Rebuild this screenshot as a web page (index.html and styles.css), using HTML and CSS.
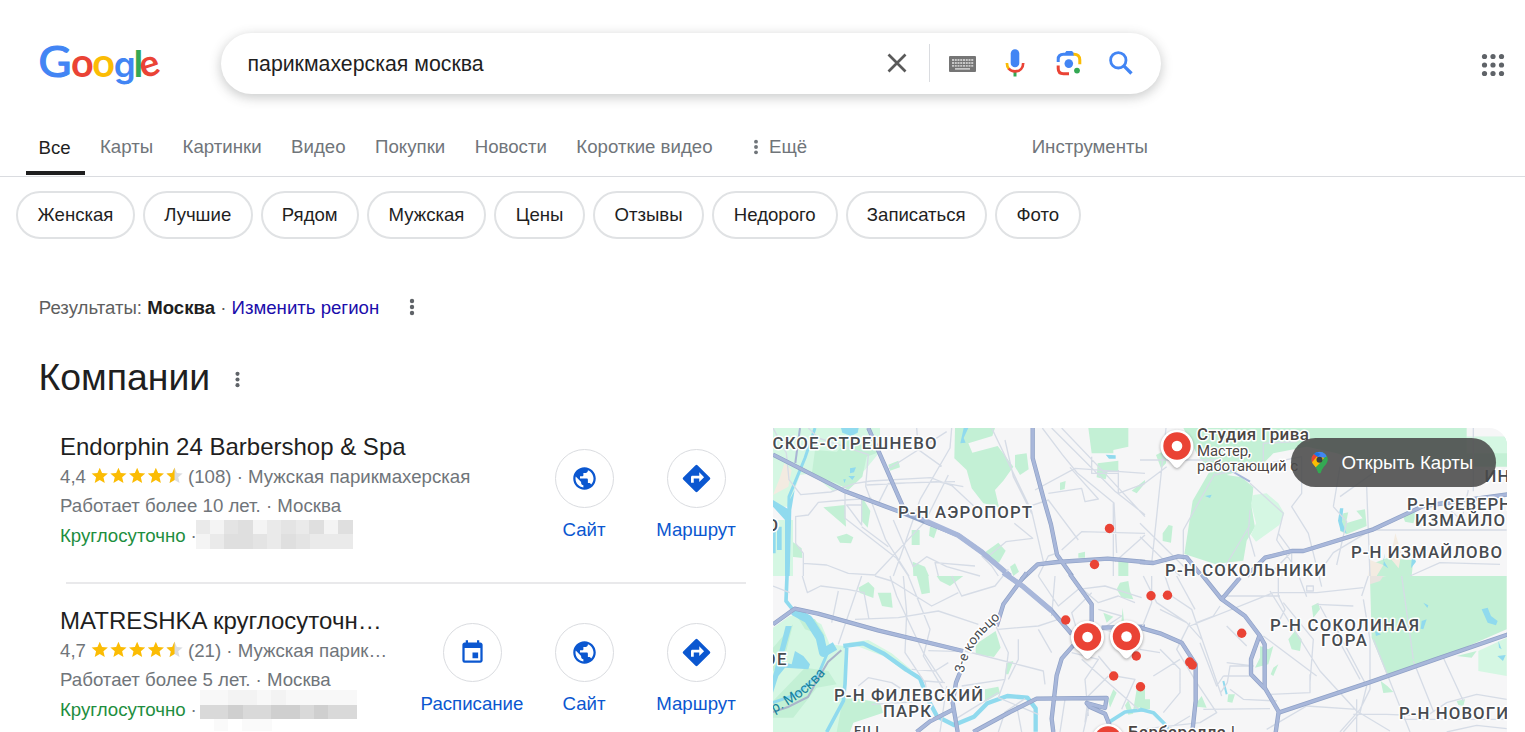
FILE: index.html
```html
<!DOCTYPE html>
<html lang="ru">
<head>
<meta charset="utf-8">
<title>парикмахерская москва - Поиск в Google</title>
<link rel="stylesheet" href="styles.css">
</head>
<body>
<svg class="defs" width="0" height="0">
  <defs>
    <symbol id="dots" viewBox="0 0 24 24"><circle cx="12" cy="4" r="2.900"/><circle cx="12" cy="12" r="2.900"/><circle cx="12" cy="20" r="2.900"/></symbol>
    <symbol id="globe" viewBox="0 0 24 24"><path d="M12 2C6.48 2 2 6.48 2 12s4.48 10 10 10 10-4.480 10-10S17.520 2 12 2zm-1 17.930c-3.950-.490-7-3.850-7-7.930 0-.620.080-1.210.210-1.790L9 15v1c0 1.100.900 2 2 2v1.930zm6.900-2.540c-.260-.810-1-1.390-1.900-1.390h-1v-3c0-.550-.450-1-1-1H8v-2h2c.550 0 1-.450 1-1V7h2c1.100 0 2-.900 2-2v-.410c2.930 1.190 5 4.060 5 7.410 0 2.080-.800 3.970-2.100 5.390z"/></symbol>
    <symbol id="route" viewBox="0 0 24 24"><path d="M21.710 11.290l-9-9a.996.996 0 0 0-1.410 0l-9 9a.996.996 0 0 0 0 1.410l9 9c.390.390 1.020.390 1.410 0l9-9a.996.996 0 0 0 0-1.410zM14 14.500V12h-4v3H8v-4c0-.550.450-1 1-1h5V7.500l3.500 3.500-3.500 3.500z"/></symbol>
    <symbol id="calendar" viewBox="0 0 24 24"><path d="M17 12h-5v5h5v-5zM16 1v2H8V1H6v2H5c-1.110 0-1.990.900-1.990 2L3 19a2 2 0 0 0 2 2h14c1.100 0 2-.900 2-2V5c0-1.100-.900-2-2-2h-1V1h-2zm3 18H5V8h14v11z"/></symbol>
    <symbol id="star" viewBox="0 0 24 24"><path d="M12 17.270L18.180 21l-1.640-7.030L22 9.240l-7.190-.610L12 2 9.190 8.630 2 9.240l5.460 4.730L5.820 21z"/></symbol>
    <symbol id="stars" viewBox="0 0 92 18">
      <g fill="#fbbc04"><use href="#star" x="-1" y="-1" width="19.500" height="19.500"/><use href="#star" x="17.700" y="-1" width="19.500" height="19.500"/><use href="#star" x="36.400" y="-1" width="19.500" height="19.500"/><use href="#star" x="55.100" y="-1" width="19.500" height="19.500"/></g>
      <use href="#star" x="73.800" y="-1" width="19.500" height="19.500" fill="#dadce0"/>
      <path fill="#fbbc04" d="M83.550 .6V13l-5 3.100 1.300-5.700-4.400-3.900 5.800-.5z"/>
    </symbol>
    <symbol id="pin" viewBox="-18 -18 36 42"><path d="M0 22C-2.500 22-4 19-8 14.600A16.500 16.500 0 1 1 8 14.600C4 19 2.500 22 0 22z" fill="#fff"/><circle r="13.700" fill="#ea4335"/><circle r="5.300" fill="#fff"/></symbol>
  </defs>
</svg>

<header class="header">
  <svg class="logo" viewBox="0 0 126 50" role="img" aria-label="Google">
    <text class="lg-a" transform="translate(-.6 35.700) scale(1.060 1)" fill="#4285f4">G</text>
    <text class="lg-b" x="32" y="35.900" fill="#ea4335">o</text>
    <text class="lg-b" x="53.200" y="35.900" fill="#fbbc05">o</text>
    <text class="lg-c" x="74.700" y="35.700" fill="#4285f4">g</text>
    <text class="lg-d" x="94.500" y="36" fill="#34a853">l</text>
    <text class="lg-e" transform="translate(104.300 37.800) rotate(-18)" fill="#ea4335">e</text>
  </svg>
  <div class="search">
    <span class="query">парикмахерская москва</span>
    <div class="tools">
      <svg class="t-close" viewBox="0 0 20 20"><path d="M1.500 1.500l17 17M18.500 1.500l-17 17"/></svg>
      <span class="t-sep"></span>
      <svg class="t-kbd" viewBox="0 0 27 16"><rect width="27" height="16" rx="1" fill="#757575"/><path d="M3 4h21.500M3 7h21.500M3 9.900h21.500" stroke="#c8c8c8" stroke-width="1.800" stroke-dasharray="2 .75"/><path d="M6 12.900h15" stroke="#e4e4e4" stroke-width="1.300"/></svg>
      <svg class="t-mic" viewBox="0 0 24 30" fill="none"><rect x="7.700" y="1.200" width="8.600" height="18" rx="4.300" fill="#4285f4"/><path d="M12 24v4.500" stroke="#34a853" stroke-width="3"/><path d="M3.900 15c0 2.300.7 4.400 2 5.800" stroke="#fbbc04" stroke-width="2.700"/><path d="M5.600 20.500c1.500 1.800 3.700 2.900 6.400 2.900 5 0 8.200-3.500 8.200-8.400" stroke="#ea4335" stroke-width="2.700"/></svg>
      <svg class="t-lens" viewBox="0 0 26 26" fill="none" stroke-width="3"><path d="M2.200 12V9.500Q2.200 4.300 7.500 4.300H18" stroke="#4285f4"/><path d="M8 4.500L10.300 1h5.800l2.800 4z" fill="#4285f4"/><path d="M17.500 4.300Q23.800 4 23.800 10v4.300" stroke="#fbbc04"/><path d="M2.200 15.500v3Q2.200 23.800 7.500 23.800H13" stroke="#ea4335"/><circle cx="12.800" cy="13.600" r="4.300" fill="#4285f4"/><circle cx="21" cy="20.600" r="2.900" fill="#34a853"/></svg>
      <svg class="t-search" viewBox="0 0 24 24" fill="none" stroke="#4285f4"><circle cx="9.300" cy="9.300" r="7.700" stroke-width="2.800"/><path d="M14.800 14.800l7.700 7.700" stroke-width="3.300"/></svg>
    </div>
  </div>
  <svg class="apps" viewBox="0 0 24 24" fill="#5f6368"><circle cx="3.500" cy="3.500" r="2.600"/><circle cx="12" cy="3.500" r="2.600"/><circle cx="20.500" cy="3.500" r="2.600"/><circle cx="3.500" cy="12" r="2.600"/><circle cx="12" cy="12" r="2.600"/><circle cx="20.500" cy="12" r="2.600"/><circle cx="3.500" cy="20.500" r="2.600"/><circle cx="12" cy="20.500" r="2.600"/><circle cx="20.500" cy="20.500" r="2.600"/></svg>
</header>

<nav class="tabs">
  <span class="tab active">Все</span><span class="tab">Карты</span><span class="tab">Картинки</span><span class="tab">Видео</span><span class="tab">Покупки</span><span class="tab">Новости</span><span class="tab">Короткие видео</span>
  <span class="tab more"><svg class="more-dots"><use href="#dots"/></svg>Ещё</span>
  <span class="tab instruments">Инструменты</span>
</nav>

<div class="chips">
  <span class="chip w119">Женская</span><span class="chip w110">Лучшие</span><span class="chip w98">Рядом</span><span class="chip w119">Мужская</span><span class="chip w91">Цены</span><span class="chip w111">Отзывы</span><span class="chip w126">Недорого</span><span class="chip w141">Записаться</span><span class="chip w85">Фото</span>
</div>

<div class="region">
  <span>Результаты: <b>Москва</b> · <a>Изменить регион</a></span>
  <svg class="kebab"><use href="#dots"/></svg>
</div>
<div class="heading"><h2>Компании</h2><svg class="kebab small"><use href="#dots"/></svg></div>

<main class="content">
  <section class="list">
    <article class="place">
      <div class="info">
        <h3>Endorphin 24 Barbershop &amp; Spa</h3>
        <p><span>4,4</span><svg class="stars"><use href="#stars"/></svg><span>(108) · Мужская парикмахерская</span></p>
        <p>Работает более 10 лет. · Москва</p>
        <p><span class="open">Круглосуточно</span><span>·</span><svg class="pixels first" viewBox="0 0 157 29"><rect width="157" height="29" fill="#eaeaea"/><path fill="#f4f4f4" d="M14 0h14v14H14zM57 0h14v14H57zM128 0h15v14h-15zM0 14h14v15H0z"/><path fill="#dfdfdf" d="M42 0h15v14H42zM85 14h15v15H85zM113 0h15v14h-15zM142 0h15v14h-15zM28 14h29v15H28z"/><path fill="#e4e4e4" d="M28 0h14v14H28zM85 0h15v14H85zM57 14h14v15H57zM100 14h14v15h-14z"/></svg></p>
      </div>
      <div class="actions">
        <div class="action"><span class="round"><svg class="i-globe"><use href="#globe"/></svg></span>Сайт</div>
        <div class="action"><span class="round"><svg class="i-route"><use href="#route"/></svg></span>Маршрут</div>
      </div>
    </article>
    <article class="place second">
      <div class="info">
        <h3>MATRESHKA круглосуточн…</h3>
        <p><span>4,7</span><svg class="stars"><use href="#stars"/></svg><span>(21) · Мужская парик…</span></p>
        <p>Работает более 5 лет. · Москва</p>
        <p><span class="open">Круглосуточно</span><span>·</span><svg class="pixels last" viewBox="0 0 157 41"><path fill="#f8f8f8" d="M0 0h157v15H0z"/><path fill="#f3f3f3" d="M28 0h29v15H28zM71 0h15v15H71z"/><path fill="#d9d9d9" d="M0 15h157v14H0z"/><path fill="#cfcfcf" d="M28 15h15v14H28zM71 15h29v14H71zM114 15h14v14h-14z"/><path fill="#fafafa" d="M14 29h14v12H14zM42 29h30v12H42z"/></svg></p>
      </div>
      <div class="actions">
        <div class="action"><span class="round"><svg class="i-cal"><use href="#calendar"/></svg></span>Расписание</div>
        <div class="action"><span class="round"><svg class="i-globe"><use href="#globe"/></svg></span>Сайт</div>
        <div class="action"><span class="round"><svg class="i-route"><use href="#route"/></svg></span>Маршрут</div>
      </div>
    </article>
  </section>

  <section class="map">
    <svg class="map-canvas" viewBox="773 428 734 304">
      <rect x="772" y="428" width="736" height="305" fill="#f6f6f7"/>
      <!-- north-west -->
      <g transform="translate(765 420) scale(.33333)">
        <path class="park-l" d="M24 24H345V95L300 150 205 215 140 160 105 165 70 260H24z"/>
        <path class="park" d="M150 90L215 95 250 60 345 95 305 110 292 170 250 210 215 190 140 165zM570 24H690L682 48 610 70 622 98 698 78 745 140 715 182 690 210 702 262 655 250 620 205 605 150 568 115zM750 105l35-5 6 48-26 17-15-25zM970 24H1090V80L1045 90V100H980zM998 130l62-8v33h-32l-6 23-27-6zM175 262l65-7 3 65zM288 225l28 48-8 50-20-23zM215 350l30-9 20 11-7 18-33-2zM440 330h24v45h-24zM495 320l22 5-10 30-15-8zM370 134l30-12 5 20-30 10zM75 360l35 25 2 29-32-4zM443 425l37 15 12 28h-47zM885 188l17-5-3 24-14 4zM940 400l20-5v18h-20zM1060 425h30v43h-30zM662 395l38-27 22 24-20 36-40-18zM735 440l15-10 12 25-17 13zM1100 212l40-32v10l-25 30z"/>
        <path fill="#f3ebe1" d="M58 130l22 20-10 50-46 25 20-50z"/>
        <path class="park-l" d="M24 300h60v168H24z"/>
        <path class="water" d="M228 24h53l-3 14-20 10-26-10zM255 145l18-3-6 15-12 3zM250 168l20 0-8 12zM235 178l8 0-5 12zM1022 104l30 2v10h-20zM24 240l50 30v-30l15-30-10 60-5 198H60V300l-36-40zM36 320h14v70H36zM24 330h8v70h-8zM596 24h14l-14 30 6 14-16 2z"/>
        <path class="river" d="M150 24l-30 90-48 116-5 238" stroke-width="9"/>
        <g class="minor">
          <path d="M24 24l40 75 8 80 35 45 90-8 70-25 50-8 180-10 65 25 70 65M130 24l30 30 150 50-8 95 60 160 70 109M305 195l210-10 80 15M560 24l-5 60-90 155-55 160-25 69M455 24l5 65 70 50M545 35L365 150M90 290l40-5 30-38 80-7 80-5M92 290v80l23 30v68M115 430l70 5 65 25 80 5 150-160 70-140M240 210v85l155 120 35 53M290 225v90l-45-60h45M290 320l80 60M385 300l60 140 40-30 60 30 100 28M680 24l120 250 35 150M720 60l25 110 55 110M832 24l60 80 45 55 110 90 8 150M860 24l190 190 90 70M1140 290l-120-130-130-136M810 210l120-65 210 15M980 110v50h80M1060 150v70l80-30M850 220l100-15 10 40 40-8-85-95M790 260l60-20 90 120M748 310l55 45-80 10-60 50M890 390l60-55 190 5M1140 345l-90 80M1045 468V250M820 468l30-60 30-10M700 468l-20-30-30-30M520 468l-10-40 120 10M340 250l30-60 200-5"/>
        </g>
        <g class="hwy-case"><path d="M310 24l110 250 60 28"/><path d="M24 104l216 110 160 60 180 72 70 50 85 72"/><path d="M803 24v90l35 130 20 70 18 90 45 64"/><path d="M770 478l48-45 60-7 150-10 112 10"/></g>
        <path d="M105 24l-14 105" fill="none" stroke="#a8b4d4" stroke-width="6"/>
        <g class="hwy"><path d="M310 24l110 250 60 28"/><path d="M24 104l216 110 160 60"/><path class="wide" d="M480 302l100 44 70 50 85 72"/><path d="M803 24v90l35 130 20 70 18 90 45 64"/><path d="M770 478l48-45 60-7 150-10 112 10"/></g>
      </g>
      <!-- north-east -->
      <g transform="translate(1140 420) scale(.33333)">
        <path class="park" d="M130 24H980V50H1110V140H700L590 100 500 80 400 100 370 130 260 165 225 160 175 110zM225 160l80 12 35 30-5 60 10 60-25 40-10 60-85 10-92-30 25-160 55-95zM48 105l30-15v40l-15 15zM68 340l18-25 12 3-5 50-25-5zM610 280l65-12 5 50-60 25-20-10zM790 290l20-20 20 10-10 30-25-5zM700 430l40-15 80 5-5 48H710z"/>
        <path class="park-l" d="M340 225l40-5 35 30 18 30-15 35-70 50-15-20 15-35-15-60zM980 50h130V100H980z"/>
        <path fill="#f3ebe1" d="M690 420l40 15-20 33h-25zM766 340l18 60-8 45-25-30z"/>
        <path fill="#f6f6f7" d="M630 250l38 45-50 15z"/>
        <path class="water" d="M195 228l20-4-5 10zM600 265h10l-4 40 14 35-18-8-8-30zM735 400l-5 20 15 25-15-10zM820 405l8 20-15 20 2-25z"/>
        <g class="minor">
          <path d="M0 120h240M0 200l80-60M78 24L35 430M0 310l160 158M0 350l120 118M225 160L130 330v90M225 165l60-15 100-20 100-20 0 110-30 40 50 80 40 160M330 190l100 90-20 80 60 90 30 80M330 270l-5 70 20 70M580 260l20-120M580 260l40 45-30 130M680 200l10 268M600 230l140-100M430 280l-15 60 40 55v73M455 395l-70 73M370 130V70l100-5M700 330h400M530 468l50-70 100-60M810 468l90-40 180 5M905 250l60 50 20-90M1000 24v190M240 465l90-150"/>
        </g>
        <path d="M270 150l60 35" fill="none" stroke="#a8b7da" stroke-width="6"/>
        <g class="hwy-case"><path d="M0 426l40 3 75-20 25 3 40 50"/><path d="M320 468l55-55 80-20h35l210-65 150-70 255-35"/></g>
        <g class="hwy"><path d="M0 426l40 3 75-20 25 3 40 50"/><path d="M320 468l55-55 80-20h35l210-65 150-70 255-35"/></g>
      </g>
      <!-- south-west -->
      <g transform="translate(765 576) scale(.33333)">
        <path class="park-l" d="M24 155l50-35 40-5 55 30 25 60 45 5-5 258H24z"/>
        <path class="park" d="M90 110l60 20 30 50-60-20zM24 215l60-70-30 120-30 20zM120 275l70 10 25 40-60 10-70 90-61 0 0-50zM235 360l110 20 10 30-90 30-10 28H215zM280 35l30-17 18 18-3 30-40-15zM338 50l40 0 5 45-32-5zM455 0h35l5 50-25 5zM515 0h80l-40 30-30-15zM632 205l60-40 15 50-20 28-55-8zM660 340l40-8 5 20-45 25zM1065 20l25-5 5 30 10 25-35-5-15-25zM1015 110l30 12-20 18zM1045 340l10 10-20 45-5-20zM1115 340l25-10v60l-35 10zM1080 388l10-15 15 40-15 3zM725 260l20-5-15 40-10 0zM1068 150l5-55 6 60z"/>
        <path class="park-l" d="M250 200l60-8 70 40 60 50-20 5-60-45z"/>
        <path class="water" d="M80 150h-18l-38 150v50l16-50 20-25 70 5 5-15-20-25-25-15-10 40-30-8z"/>
        <path class="river" d="M66 0l-3 75 20 25" stroke-width="11"/>
        <path class="river" d="M85 105l45 25 35 55 10 45 35-20" stroke-width="26"/>
        <path class="river" d="M190 225l-30 70-65 60-71 25" stroke-width="9"/>
        <path class="river" d="M235 210l60-8 60 30 70 50 40 25 22 60 30 55 50 25 60-25 40-40 60-22 60 5 25 32v70" stroke-width="13"/>
        <path class="river" d="M245 215l-5 110-5 50-50 93M1030 440l50-32 60-8" stroke-width="11"/>
        <path fill="none" stroke="#aab4ca" stroke-width="6" d="M24 408l45-15 60-30 30-55 30-50 40-35"/>
        <g class="minor">
          <path d="M112 0l15 50 40-20 80 10 50 10 15 80M290 0l-70 205M200 140l20-95M270 130l130-5 120-20 120 40M330 0l50 15 120 75 80-40M375 0l20 60 80 170 60 90M415 0l10 110-5 120 60 90M430 0l65 160-20 80 60 100M600 225l235 60 5 40M490 224l105 3M560 0l30 60 100-30 40-50M540 320l-60-5 10 60-170 10M280 330l30-25 70 15 55 35M545 330l-20 138M590 330l130-20-20 55 120 50M720 310l10-80-40-85M700 160l120-10 60-20M760 190v60l-30 60M820 0l60 90 60-50 80-10 110 35M870 0l-10 120M930 20l70 60 60-20 50 20M980 50l-60 60 30 100M1000 100l70 20-60 40 100 20M920 230l80 20-40 60 10 110M1000 240l50 60 60 10-40 90M950 250l170 150M1030 300l-60 60-10 80M860 230l-40-70M570 430l130-80M700 468l20-60 60-40M770 468l-15-80M900 370l-15 98M975 380l-20 88M440 280l70 5 40-25M24 30l50 20"/>
        </g>
        <g class="hwy-case"><path d="M24 145l65-47 70 15 180 50 255 62"/><path d="M715-10l60 42 85 72 60 70"/><path d="M785-10l-70 95-20 65M585 290l-12 30-10 60 15 88"/><path d="M915-5l65 90v55M1010 155l130-3M925 208l-35 40-15 50-15 130 5 40"/><path d="M625 468l110-60 80-40 210-2-5 30-55-15 10 12 45 20 22 55M565 400l-70 36-40 32"/></g>
        <g class="hwy"><path d="M24 145l65-47 70 15 180 50 255 62"/><path class="wide" d="M715-10l60 42 85 72"/><path d="M850 95l70 79"/><path d="M785-10l-70 95-20 65M585 290l-12 30-10 60 15 88"/><path d="M915-5l65 90v55M1010 155l130-3M925 208l-35 40-15 50-15 130 5 40"/><path d="M625 468l110-60 80-40 210-2-5 30-55-15 10 12 45 20 22 55M565 400l-70 36-40 32"/></g>
      </g>
      <!-- south-east -->
      <g transform="translate(1140 576) scale(.33333)">
        <path class="park" d="M690 5l50-5h360v160l-240 105-120 30-45-110zM515 90l20-10 5 20-20 25zM445 190l20-25 20 25-5 35-25-5zM360 210l25 10 15-10-15 55-40 10 15-30zM400 275l15-10-15 35-8-5zM722 315l20 15 18 18-30 3zM950 240l60-15-15 20zM950 375l25-5-5 20-15-3zM265 355l20 0-8 25-15-3zM0 370h30v30H0zM170 380l15-20 15 35-30-3z"/>
        <path class="park-l" d="M1015 225l85-40v115l-85-15z"/>
        <path fill="#e9e4e0" d="M690 0h40l-10 15-30 10z"/>
        <path class="water" d="M1025 100l18-5 10 25 20 15-5 13-25-8zM845 135l15-5-10 30-8-2zM705 165l18 10-15 5zM850 80l15 8-3 8zM1072 240l25-3-8 18zM1075 195l10 25-8-5z"/>
        <path class="river" d="M0 400l40 10 40 40 5 20" stroke-width="11"/>
        <path class="river" d="M250 315l10 40" stroke-width="6"/>
        <g class="minor">
          <path d="M10 0l40 80 90 60 45 50M75 0l20 60 60 40 90 260M110 0l55 100M35 0v80L0 170M150 140l-40 80 60 100 60 90-50 30-180 20M140 140l-80-40M150 150l250-100h130l140-15M415 0v60l20 40-20 40M240 60l180 0M430 80l90 110-10 130M390 45l150 240 110 120 100 60M500 30h20v15h-20zM540 90l120 220M590 160l90 170-20 80-50 58M685 0l-20 60M670 70l20 120v150l-30 60-60 68M640 90l-110-5M510 295V350l-120 5M530 300l-120-90-40-30M700 190l110 278M820 255l60 150M910 245l60 130M1100 370l-90-15-90 25-60 40-120-5-100 0M60 220l60 60v70l-50 60M0 220l60 10M260 260l80 10-70 0-8 50-20 30M330 300l-80 0M180 200l50 130 20-30M190 400l200-2M150 420l-80 48M40 300l80-50M260 150l60 60M270 340l40 30 100 5M380 460l120-70 150 10M920 468l90-20 90 10M780 430h320M650 370v98M170 140l50-20 20-30"/>
          <path d="M785 0l35 250"/>
        </g>
        <g class="hwy-case"><path d="M185-5l60 75 70 50 45 60 14 25v130l42 72-10 70"/><path d="M300 5l-55 65"/><path d="M358 180l-25 70v45l42 43"/><path d="M416 410l270-90 200-70 219-75"/><path d="M0 155l60 17 65 28 42 65v110l-10 93"/></g>
        <g class="hwy"><path d="M185-5l60 75 70 50 45 60 14 25v130l42 72-10 70"/><path d="M300 5l-55 65"/><path d="M358 180l-25 70v45l42 43"/><path d="M416 410l270-90 200-70 219-75"/><path d="M0 155l60 17 65 28 42 65v110l-10 93"/></g>
      </g>

      <path id="ring-path" d="M964 673C966 656 976 638 1001 618" fill="none"/>
      <path id="river-path" d="M774 713C797 701 813 690 829 669" fill="none"/>
      <g class="label">
        <text x="772.500" y="449" textLength="164">СКОЕ-СТРЕШНЕВО</text>
        <text x="898" y="518" textLength="134">Р-Н АЭРОПОРТ</text>
        <text x="766.500" y="531">О</text>
        <text x="1484.500" y="482" textLength="25">ИН</text>
        <text x="1407" y="509.500" textLength="104">Р-Н СЕВЕРН</text>
        <text x="1415" y="525.500" textLength="90">ИЗМАЙЛО</text>
        <text x="1351" y="557.500" textLength="151">Р-Н ИЗМАЙЛОВО</text>
        <text x="1165" y="576" textLength="161">Р-Н СОКОЛЬНИКИ</text>
        <text x="1270" y="630.500" textLength="149">Р-Н СОКОЛИНАЯ</text>
        <text x="1321" y="646" textLength="46">ГОРА</text>
        <text x="1399" y="719" textLength="109">Р-Н НОВОГИ</text>
        <text x="834" y="701" textLength="149">Р-Н ФИЛЕВСКИЙ</text>
        <text x="883" y="717" textLength="48">ПАРК</text>
        <text x="764" y="665" textLength="22.500">ОЕ</text>
        <text class="fili" x="854" y="735" textLength="25">FILI</text>
      </g>
      <text class="road-name"><textPath href="#ring-path">3-е кольцо</textPath></text>
      <text class="river-name"><textPath href="#river-path">р. Москва</textPath></text>
      <g class="poi">
        <text class="poi-title" x="1197" y="440" textLength="112">Студия Грива</text>
        <text x="1197" y="456" textLength="54">Мастер,</text>
        <text x="1197" y="470.500" textLength="101">работающий с</text>
        <text class="poi-title" x="1128" y="738" textLength="107">Барбарелла |</text>
      </g>
      <g fill="#ea4335"><circle cx="1109.500" cy="528.500" r="4.700"/><circle cx="1094.500" cy="564.500" r="4.700"/><circle cx="1151" cy="595.700" r="4.700"/><circle cx="1167.500" cy="595.300" r="4.700"/><circle cx="1065.700" cy="620" r="4.700"/><circle cx="1241.700" cy="633.300" r="4.700"/><circle cx="1136.300" cy="656" r="4.700"/><circle cx="1113.700" cy="676" r="4.700"/><circle cx="1140.500" cy="686.700" r="4.700"/><circle cx="1189.700" cy="662" r="4.700"/><circle cx="1192.300" cy="665" r="4.700"/></g>
      <g class="pins"><use href="#pin" x="1159" y="428" width="36" height="42"/><use href="#pin" x="1069.500" y="619" width="36" height="42"/><use href="#pin" x="1108.500" y="618.500" width="36" height="42"/><use href="#pin" x="1090" y="722" width="36" height="42"/></g>
    </svg>
    <div class="open-maps">
      <svg class="maps-logo" viewBox="0 0 18 24"><clipPath id="drop"><path d="M9 .5a8.500 8.500 0 0 1 8.500 8.500c0 5-5.500 7-7 13.500-.5 1.600-2.500 1.600-3 0C6 16 .5 14 .5 9A8.500 8.500 0 0 1 9 .5z"/></clipPath><g clip-path="url(#drop)"><path fill="#34a853" d="M0 0h18v24H0z"/><path fill="#4285f4" d="M3 0h15v5L9 9z"/><path fill="#1a73e8" d="M3-1l7 4-5 5-3-3z"/><path fill="#ea4335" d="M0 0l3 3 5 4-7 7-3-3z"/><path fill="#fbbc04" d="M0 13L6 6l8 1-8 11z"/><path fill="#34a853" d="M18 4v8L8 24 5 17z"/></g><circle cx="9" cy="9" r="3.200" fill="#3c3f41"/></svg>
      <span>Открыть Карты</span>
    </div>
  </section>
</main>
</body>
</html>
```
FILE: styles.css
```css
* { box-sizing: border-box; }
body { margin: 0; width: 1525px; height: 732px; overflow: hidden; background: #fff; color: #1f1f1f; font-family: "Liberation Sans", Arial, sans-serif; font-size: 18.670px; }
svg { display: block; flex: none; overflow: visible; }
.defs { position: absolute; }
h2, h3, p { margin: 0; font-weight: 400; }

.header { display: flex; height: 118px; padding: 33px 20px 0 39px; align-items: flex-start; }
.logo { width: 126px; height: 50px; margin-top: 8px; }
.lg-a { font: 400 42.500px Lato, sans-serif; stroke: #4285f4; stroke-width: 1.200px; }
.lg-b { font: 600 38px Inter, sans-serif; font: 700 39.500px Lato, sans-serif; }
.lg-c { font: 600 35px Inter, sans-serif; }
.lg-d { font: 600 37.500px Inter, sans-serif; }
.lg-e { font: 700 37px Lato, sans-serif; }
.search { display: flex; align-items: center; width: 940px; height: 61px; margin-left: 55.500px; padding: 0 28px 0 27px; border-radius: 31px; background: #fff; box-shadow: 0 3px 11px 1px rgba(60, 64, 67, .26); }
.query { flex: 1; padding-top: 1px; font-size: 21.300px; }
.tools { display: flex; align-items: center; margin-top: -1px; }
.t-close { width: 20px; height: 20px; stroke: #5a5a5a; stroke-width: 2.700; }
.t-sep { width: 1px; height: 38px; margin: 0 19px 0 22px; background: #dadce0; }
.t-kbd { width: 27px; height: 16px; margin-top: 1px; }
.t-mic { width: 24px; height: 30px; margin-left: 27px; }
.t-lens { width: 26px; height: 26px; margin-left: 28.500px; }
.t-search { width: 24px; height: 24px; margin-left: 27px; }
.apps { width: 24px; height: 24px; margin: 20px 0 0 auto; }

.tabs { display: flex; height: 59px; padding: 0 0 0 26px; border-bottom: 1px solid #dadce0; color: #70757a; }
.tab { height: 58px; padding-top: 18px; margin-right: 29.450px; white-space: nowrap; }
.tab.active { width: 58.500px; padding-left: 12.500px; margin-right: 15.500px; padding-top: 19px; height: 57px; border-bottom: 4px solid #1f1f1f; color: #1f1f1f; }
.tab.more { display: flex; gap: 5px; margin: 0 0 0 6px; }
.more-dots { width: 16px; height: 16px; margin-top: 3px; fill: #70757a; }
.tab.instruments { margin: 0 377px 0 auto; }

.chips { display: flex; gap: 8px; padding: 14px 16px 0; }
.chip { display: flex; align-items: center; justify-content: center; height: 48px; border: 2px solid #e0e2e4; border-radius: 24px; font-size: 18.600px; }
.w85 { width: 85.500px; } .w91 { width: 91px; } .w98 { width: 98.500px; } .w110 { width: 109.500px; } .w111 { width: 111px; } .w119 { width: 119px; } .w126 { width: 125.500px; } .w141 { width: 141.500px; }

.region { display: flex; align-items: center; height: 26px; margin: 56px 0 0 38.800px; color: #5e5e5e; font-size: 18.630px; }
.region b { color: #1f1f1f; }
.region a { color: #1a0dab; }
.kebab { width: 18px; height: 18px; margin: -3px 0 0 24px; fill: #5f6368; }
.heading { display: flex; align-items: center; height: 50px; margin: 31px 0 0 38.500px; }
.heading h2 { font-size: 37.400px; line-height: 50px; }
.kebab.small { width: 17px; height: 17px; margin: 5px 0 0 19px; }

.content { display: flex; margin-top: 26px; }
.list { width: 746px; padding-left: 60px; }
.place { display: flex; justify-content: space-between; height: 155px; white-space: nowrap; }
.place.second { position: relative; height: 149px; padding-top: 19px; }
.place.second::before { content: ""; position: absolute; top: -1px; left: 6px; right: 0; height: 2px; background: #e9e9eb; }
.info h3 { height: 34.500px; font-size: 24px; line-height: 37px; }
.info p { display: flex; align-items: center; gap: 5px; height: 29.300px; color: #70757a; }
.info .open { color: #1e8e3e; }
.stars { width: 92px; height: 18px; margin-top: -2px; }
.pixels { width: 157px; height: 29px; }
.pixels.first { margin: -2px 0 0 -6px; }
.pixels.last { height: 41px; margin: 2px 0 0 -2px; }
.actions { display: flex; margin-right: -6px; padding-top: 21px; }
.action { display: flex; flex-direction: column; align-items: center; width: 112px; gap: 10px; color: #0b57d0; line-height: 24px; }
.round { display: flex; align-items: center; justify-content: center; width: 59px; height: 59px; border: 1px solid #dadce0; border-radius: 50%; }
.round svg { fill: #0b57d0; }
.i-globe { width: 27px; height: 27px; }
.i-route { width: 33px; height: 33px; }
.i-cal { width: 27px; height: 27px; }

.map { position: relative; width: 734px; height: 304px; margin-left: 26.500px; overflow: hidden; border-radius: 0 18px 0 0; }
.map-canvas { width: 734px; height: 304px; overflow: hidden; }
.park { fill: #c3f0d5; }
.park-l { fill: #d5f7e3; }
.water { fill: #90daee; }
.river { fill: none; stroke: #90daee; stroke-linejoin: round; }
.minor { fill: none; stroke: #d6dce6; stroke-width: 4px; stroke-linejoin: round; }
.hwy-case, .hwy { fill: none; stroke-linejoin: round; }
.hwy-case { stroke: #8fa1c6; stroke-width: 13px; }
.hwy { stroke: #a8b7da; stroke-width: 9px; }
.hwy .wide { stroke-width: 16px; }
.label text, .poi text, .road-name, .river-name { font-family: Roboto, sans-serif; paint-order: stroke; stroke: #fff; stroke-width: 3px; stroke-linejoin: round; }
.label text { font-size: 16.800px; font-weight: 500; fill: #474b50; }
.label .fili { font-size: 13px; }
.road-name { font-size: 13.500px; fill: #474b50; }
.river-name { font-size: 14px; fill: #16819c; stroke: none; }
.poi text { font-size: 15px; fill: #4b4543; }
.poi .poi-title { font-size: 17px; font-weight: 500; }
.pins { filter: drop-shadow(0 1px 1.500px rgba(0, 0, 0, .35)); }
.open-maps { position: absolute; top: 10px; right: 11px; display: flex; align-items: center; width: 205px; height: 49px; padding-left: 20px; gap: 14px; border-radius: 25px; background: rgba(72, 72, 72, .87); color: #fff; white-space: nowrap; }
.maps-logo { width: 17px; height: 23px; }
```
